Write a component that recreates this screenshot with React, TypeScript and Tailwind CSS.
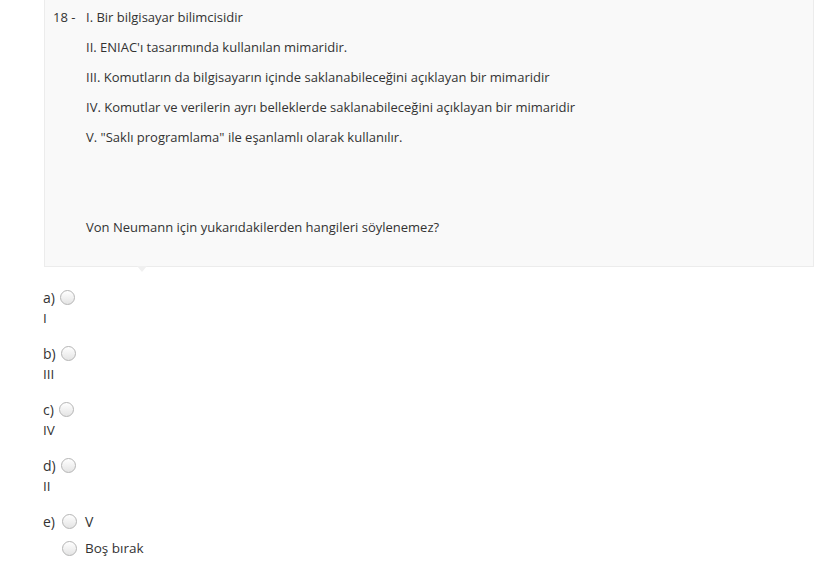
const lines = [
  "I. Bir bilgisayar bilimcisidir",
  "II. ENIAC'ı tasarımında kullanılan mimaridir.",
  "III. Komutların da bilgisayarın içinde saklanabileceğini açıklayan bir mimaridir",
  "IV. Komutlar ve verilerin ayrı belleklerde saklanabileceğini açıklayan bir mimaridir",
  'V. "Saklı programlama" ile eşanlamlı olarak kullanılır.',
];

const options = [
  { key: "a)", text: "I" },
  { key: "b)", text: "III" },
  { key: "c)", text: "IV" },
  { key: "d)", text: "II" },
];

function Radio() {
  return (
    <span className="inline-block w-[15px] h-[15px] rounded-full border border-[#b5b5b5] bg-gradient-to-b from-[#ffffff] to-[#e4e4e4] shrink-0" />
  );
}

export default function App() {
  return (
    <div className="w-[818px] h-[564px] bg-white overflow-hidden font-['Open_Sans',sans-serif] text-[#333]">
      <div className="relative ml-[44px] mr-[4px] border border-t-0 border-[#ececec] bg-[#f9f9f9] pt-[2px] pb-[24px] text-[13px]">
        <div className="flex">
          <span className="w-[41px] pl-[8px] leading-[30px] whitespace-pre">18 - </span>
          <div className="flex flex-col">
            {lines.map((l) => (
              <div key={l} className="leading-[30px]">
                {l}
              </div>
            ))}
            <div className="h-[60px]" />
            <div className="leading-[30px]">
              Von Neumann için yukarıdakilerden hangileri söylenemez?
            </div>
          </div>
        </div>
        <span className="absolute left-[92px] top-full w-0 h-0 border-x-[5px] border-x-transparent border-t-[6px] border-t-[#f0f0f0]" />
      </div>

      <div className="mt-[19px] pl-[43px] text-[14px]">
        {options.map((o) => (
          <div key={o.key} className="mb-[14px]">
            <div className="h-[22px] flex items-center gap-[5px]">
              <span>{o.key}</span>
              <Radio />
            </div>
            <div className="h-[20px] flex items-center text-[13.5px]">{o.text}</div>
          </div>
        ))}
        <div className="h-[22px] flex items-center">
          <span className="w-[19px]">e)</span>
          <Radio />
          <span className="ml-[8px]">V</span>
        </div>
        <div className="h-[22px] mt-[5px] flex items-center pl-[19px]">
          <Radio />
          <span className="ml-[8px] text-[13.5px]">Boş bırak</span>
        </div>
      </div>
    </div>
  );
}
